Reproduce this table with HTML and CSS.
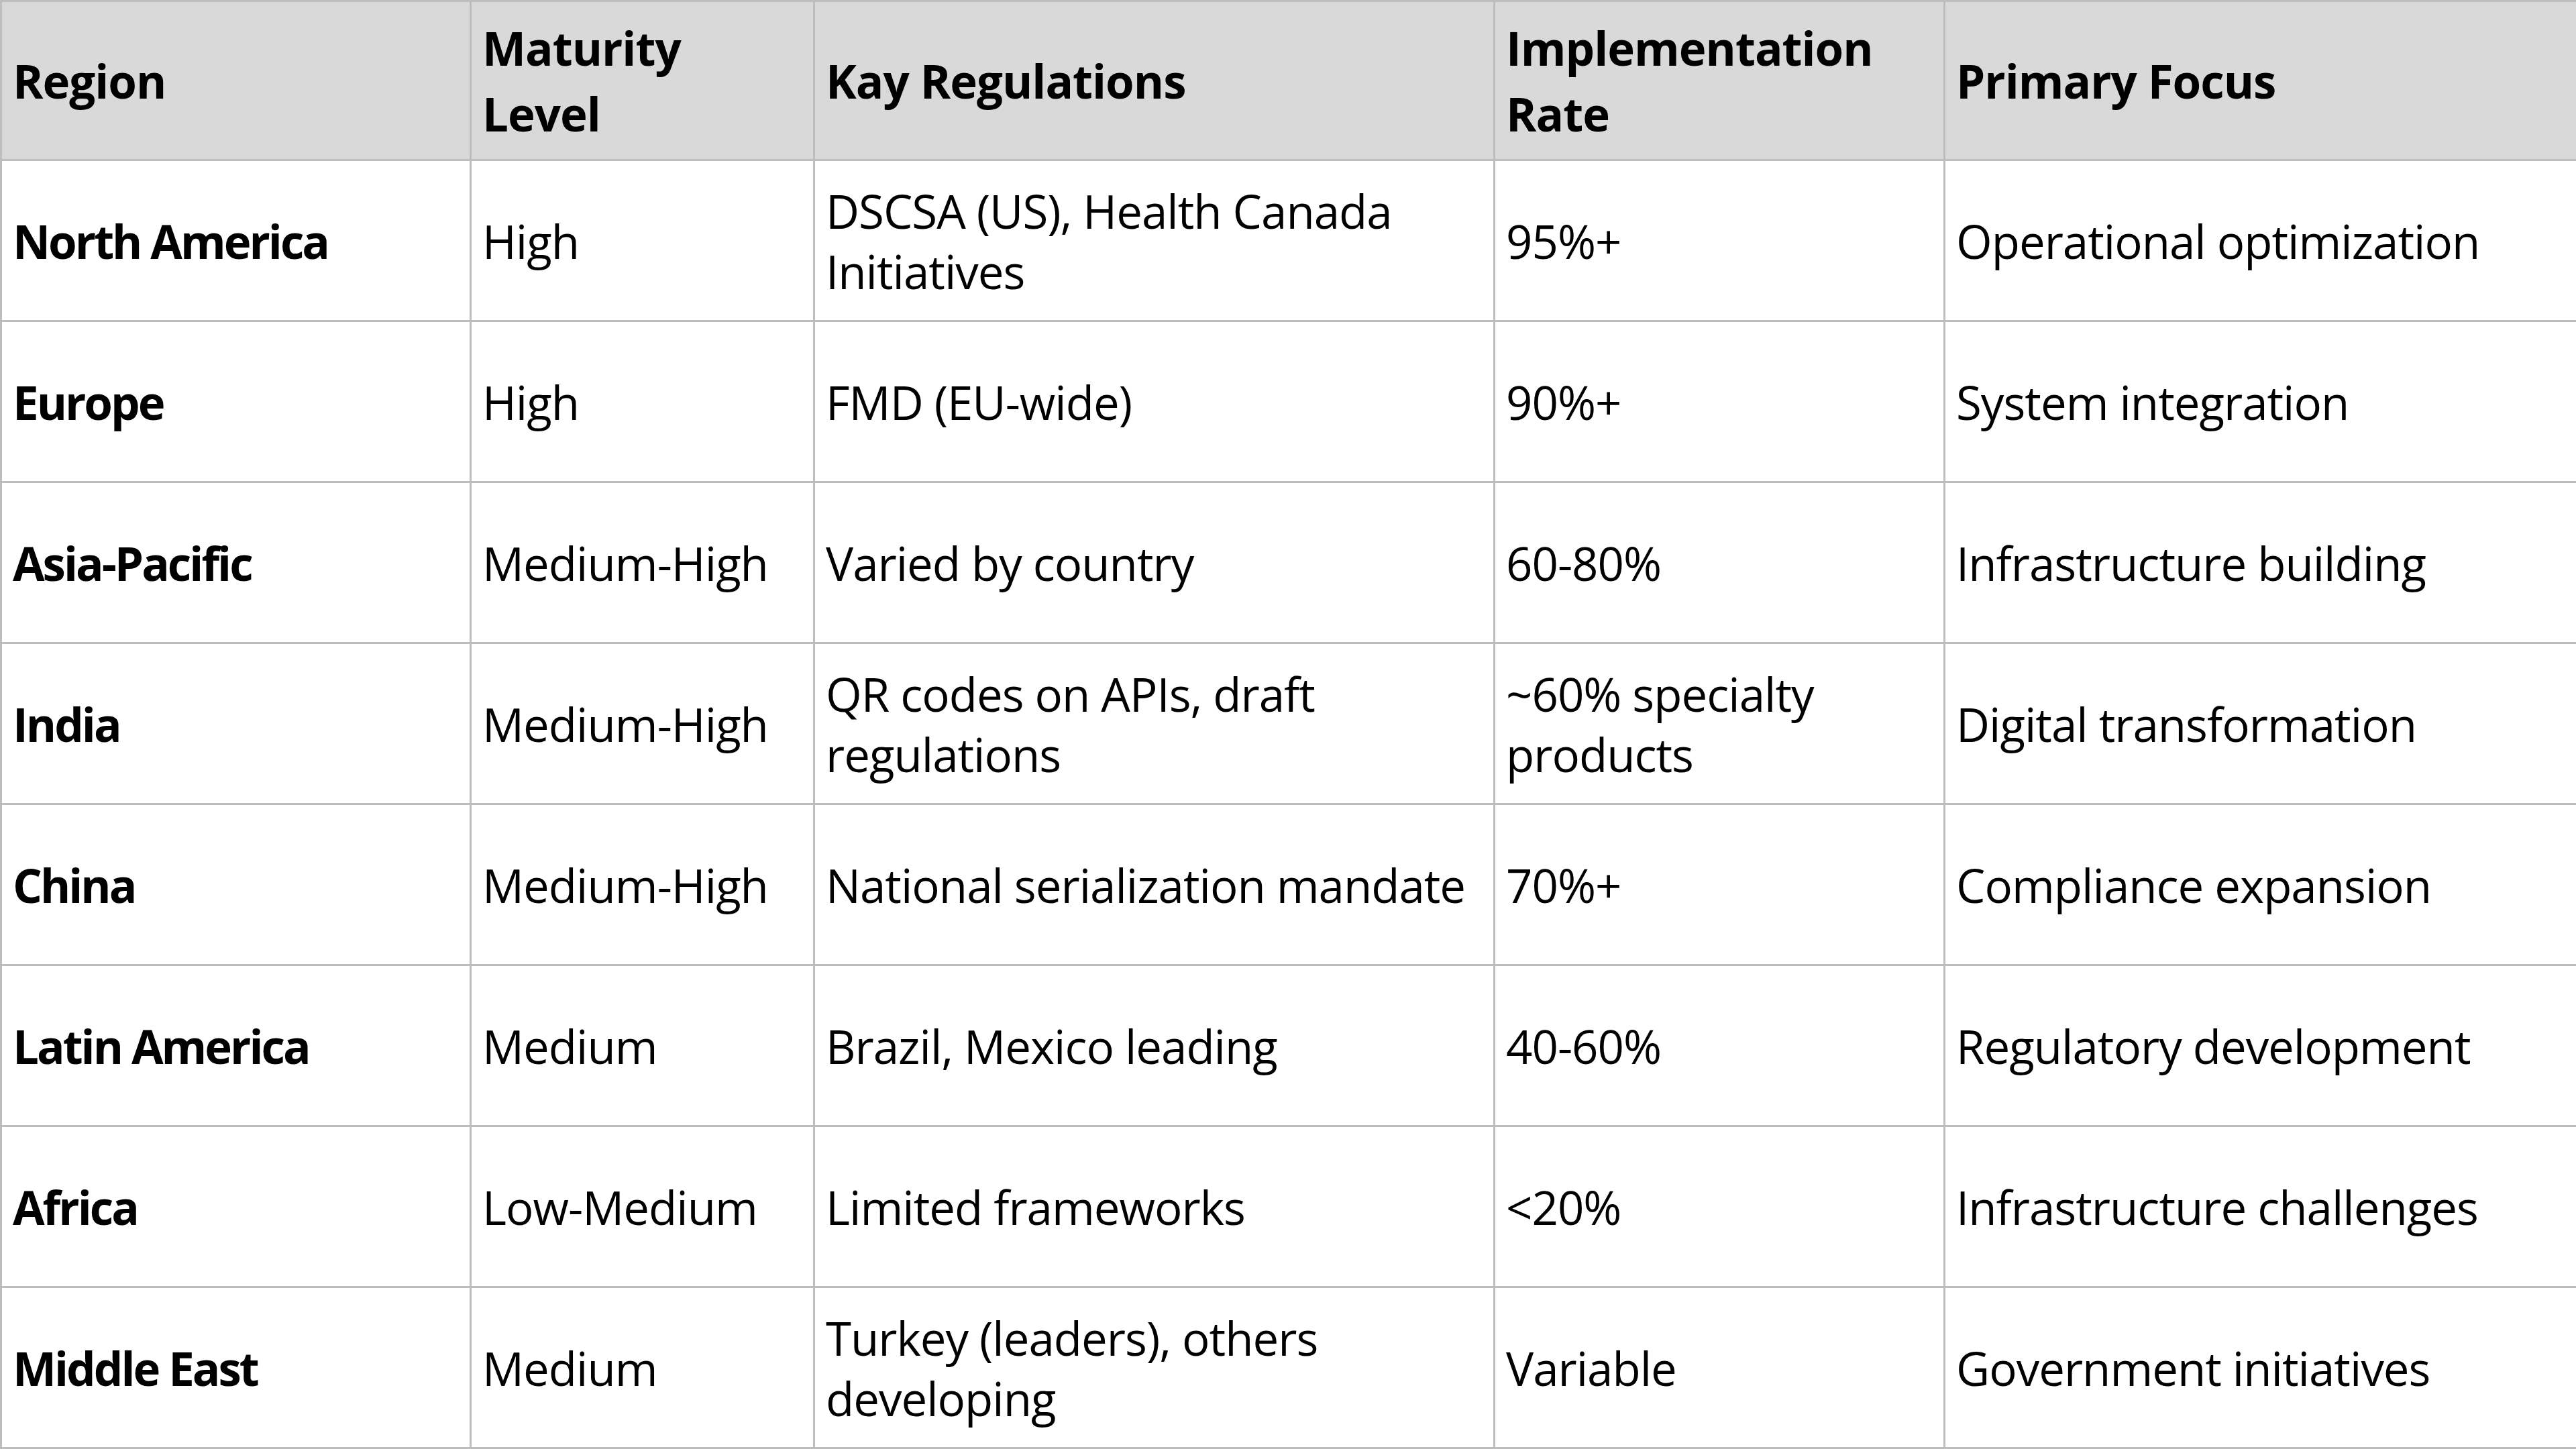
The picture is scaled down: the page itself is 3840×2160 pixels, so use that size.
FILE: index.html
```html
<!DOCTYPE html>
<html lang="en">
<head>
<meta charset="utf-8">
<title>Regional Serialization Maturity</title>
<link rel="stylesheet" href="styles.css">
</head>
<body>
<table class="grid">
  <colgroup>
    <col class="c1"><col class="c2"><col class="c3"><col class="c4"><col class="c5">
  </colgroup>
  <thead>
    <tr class="head">
      <th>Region</th>
      <th>Maturity Level</th>
      <th>Kay Regulations</th>
      <th>Implementation Rate</th>
      <th>Primary Focus</th>
    </tr>
  </thead>
  <tbody>
    <tr><td class="name">North America</td><td>High</td><td>DSCSA (US), Health Canada Initiatives</td><td>95%+</td><td>Operational optimization</td></tr>
    <tr><td class="name">Europe</td><td>High</td><td>FMD (EU-wide)</td><td>90%+</td><td>System integration</td></tr>
    <tr><td class="name">Asia-Pacific</td><td>Medium-High</td><td>Varied by country</td><td>60-80%</td><td>Infrastructure building</td></tr>
    <tr><td class="name">India</td><td>Medium-High</td><td>QR codes on APIs, draft regulations</td><td>~60% specialty products</td><td>Digital transformation</td></tr>
    <tr><td class="name">China</td><td>Medium-High</td><td>National serialization mandate</td><td>70%+</td><td>Compliance expansion</td></tr>
    <tr><td class="name">Latin America</td><td>Medium</td><td>Brazil, Mexico leading</td><td>40-60%</td><td>Regulatory development</td></tr>
    <tr><td class="name">Africa</td><td>Low-Medium</td><td>Limited frameworks</td><td>&lt;20%</td><td>Infrastructure challenges</td></tr>
    <tr><td class="name">Middle East</td><td>Medium</td><td>Turkey (leaders), others developing</td><td>Variable</td><td>Government initiatives</td></tr>
  </tbody>
</table>
</body>
</html>
```

FILE: styles.css
```css
html, body {
  margin: 0;
  padding: 0;
  background: #ffffff;
}

.grid {
  width: 3840px;
  height: 2160px;
  table-layout: fixed;
  border-collapse: collapse;
  font-family: "Open Sans", "Noto Sans", sans-serif;
  font-size: 69px;
  line-height: 90px;
  color: #000000;
}

.c1 { width: 700px; }
.c2 { width: 512px; }
.c3 { width: 1014px; }
.c4 { width: 671px; }
.c5 { width: 943px; }

.grid th,
.grid td {
  border: 3px solid #bdbdbd;
  padding: 0 14px 0 16px;
  height: 234px;
  vertical-align: middle;
  text-align: left;
}

.grid th {
  font-weight: 700;
  background: #d9d9d9;
  letter-spacing: -1px;
  line-height: 98px;
}

.grid td {
  font-weight: 400;
  letter-spacing: -1px;
}

.grid td.name {
  font-weight: 700;
  letter-spacing: -3px;
}
```
